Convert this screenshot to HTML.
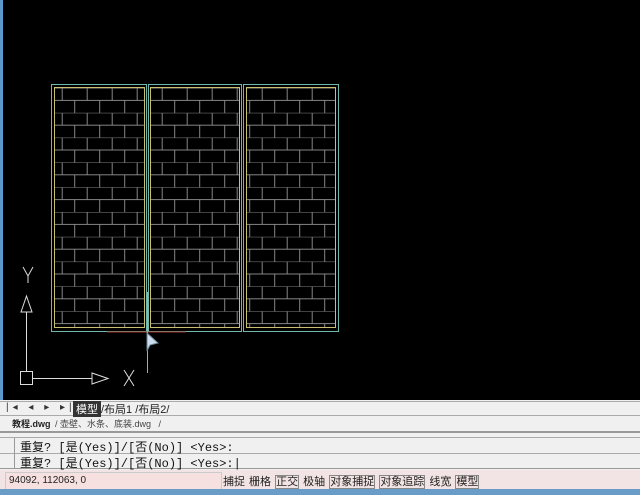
<!DOCTYPE html>
<html><head><meta charset="utf-8"><style>
body{margin:0;width:640px;height:495px;overflow:hidden;background:#000;position:relative;font-family:"Liberation Sans","Noto Sans CJK SC",sans-serif}
.a{position:absolute}
</style></head><body>
<svg class="a" style="left:0;top:0" width="640" height="400">
<defs>
<pattern id="b" x="61.7" y="88" width="25" height="24.8" patternUnits="userSpaceOnUse">
<path d="M0 0H25M0 12.4H25M0.5 0V12.4M13 12.4V24.8" stroke="#858585" stroke-width="1" fill="none"/>
</pattern>
</defs>
<rect x="0" y="0" width="3" height="400" fill="#5a9ac8"/>
<rect x="55" y="88" width="90" height="240" fill="url(#b)"/>
<rect x="151" y="88" width="88" height="240" fill="url(#b)"/>
<rect x="247" y="88" width="88" height="240" fill="url(#b)"/>
<g fill="none" stroke-width="1">
<rect x="51.5" y="84.5" width="95" height="247" stroke="#6fb8b0"/>
<rect x="148.5" y="84.5" width="93" height="247" stroke="#6fb8b0"/>
<rect x="243.5" y="84.5" width="95" height="247" stroke="#6fb8b0"/>
<rect x="54.5" y="87.5" width="90" height="240" stroke="#c8c070"/>
<rect x="150.5" y="87.5" width="89" height="240" stroke="#c8c070"/>
<rect x="246.5" y="87.5" width="89" height="240" stroke="#c8c070"/>
<path d="M107 332H186" stroke="#a03020"/>
<path d="M147.5 292V373" stroke="#aaa"/>
<path d="M26.5 312V371M33 378.5H92" stroke="#ddd"/>
<rect x="20.5" y="371.5" width="12" height="13" stroke="#ddd"/>
<path d="M26.5 296L21 312H32Z" stroke="#ddd"/>
<path d="M108 378.5L92 373V384Z" stroke="#ddd"/>
<path d="M124 370L134 386M134 370L124 386" stroke="#ddd"/>
<path d="M23 267L28 276L33 267M28 276V283" stroke="#ddd"/>
</g>
<path d="M147 333L158 343L150 345L147 351Z" fill="#cde" stroke="#689"/>
</svg>
<div class="a" style="left:0;top:400px;width:640px;height:70px;background:#f0f0f0"></div>
<div class="a" style="left:0;top:401px;width:640px;height:1px;background:#aaa"></div>
<div class="a" style="left:0;top:415px;width:640px;height:1px;background:#aaa"></div>
<div class="a" style="left:0;top:431px;width:640px;height:2px;background:#999"></div>
<div class="a" style="left:0;top:437px;width:640px;height:1px;background:#aaa"></div>
<div class="a" style="left:0;top:453px;width:640px;height:1px;background:#aaa"></div>
<div class="a" style="left:0;top:468px;width:640px;height:1px;background:#999"></div>
<div class="a" style="left:6px;top:402px;font-size:10px;color:#333;letter-spacing:4px">|◂ ◂ ▸ ▸|</div>
<div class="a" style="left:73px;top:401px;font-size:11px;padding:0 3px;background:#333;color:#fff">模型</div>
<div class="a" style="left:101px;top:401px;font-size:11px;color:#222">/布局1 /布局2/</div>
<div class="a" style="left:12px;top:417px;font-size:9px;color:#222;font-weight:bold">教程.dwg</div>
<div class="a" style="left:55px;top:417px;font-size:9px;color:#444">/ 壶壁、水条、底装.dwg &nbsp; /</div>
<div class="a" style="left:14px;top:438px;width:1px;height:30px;background:#999"></div>
<div class="a" style="left:20px;top:438px;font-size:12px;color:#111;font-family:'Liberation Mono','Noto Sans CJK SC',monospace">重复? [是(Yes)]/[否(No)] &lt;Yes&gt;:</div>
<div class="a" style="left:20px;top:454px;font-size:12px;color:#111;font-family:'Liberation Mono','Noto Sans CJK SC',monospace">重复? [是(Yes)]/[否(No)] &lt;Yes&gt;:|</div>
<div class="a" style="left:0;top:470px;width:640px;height:20px;background:#f2e4e4"></div>
<div class="a" style="left:5px;top:472px;width:212px;height:16px;background:#f6e0e0;border:1px solid #ccc;font-size:10px;line-height:16px;padding-left:3px;color:#222">94092, 112063, 0</div>
<div class="a" style="left:223px;top:473px;font-size:11px;color:#222;white-space:nowrap;word-spacing:1px">捕捉 栅格 <span style="border:1px solid #888">正交</span> 极轴 <span style="border:1px solid #888">对象捕捉</span> <span style="border:1px solid #888">对象追踪</span> 线宽 <span style="border:1px solid #888">模型</span></div>
<div class="a" style="left:0;top:489px;width:640px;height:6px;background:#6a9cc8"></div>
</body></html>
